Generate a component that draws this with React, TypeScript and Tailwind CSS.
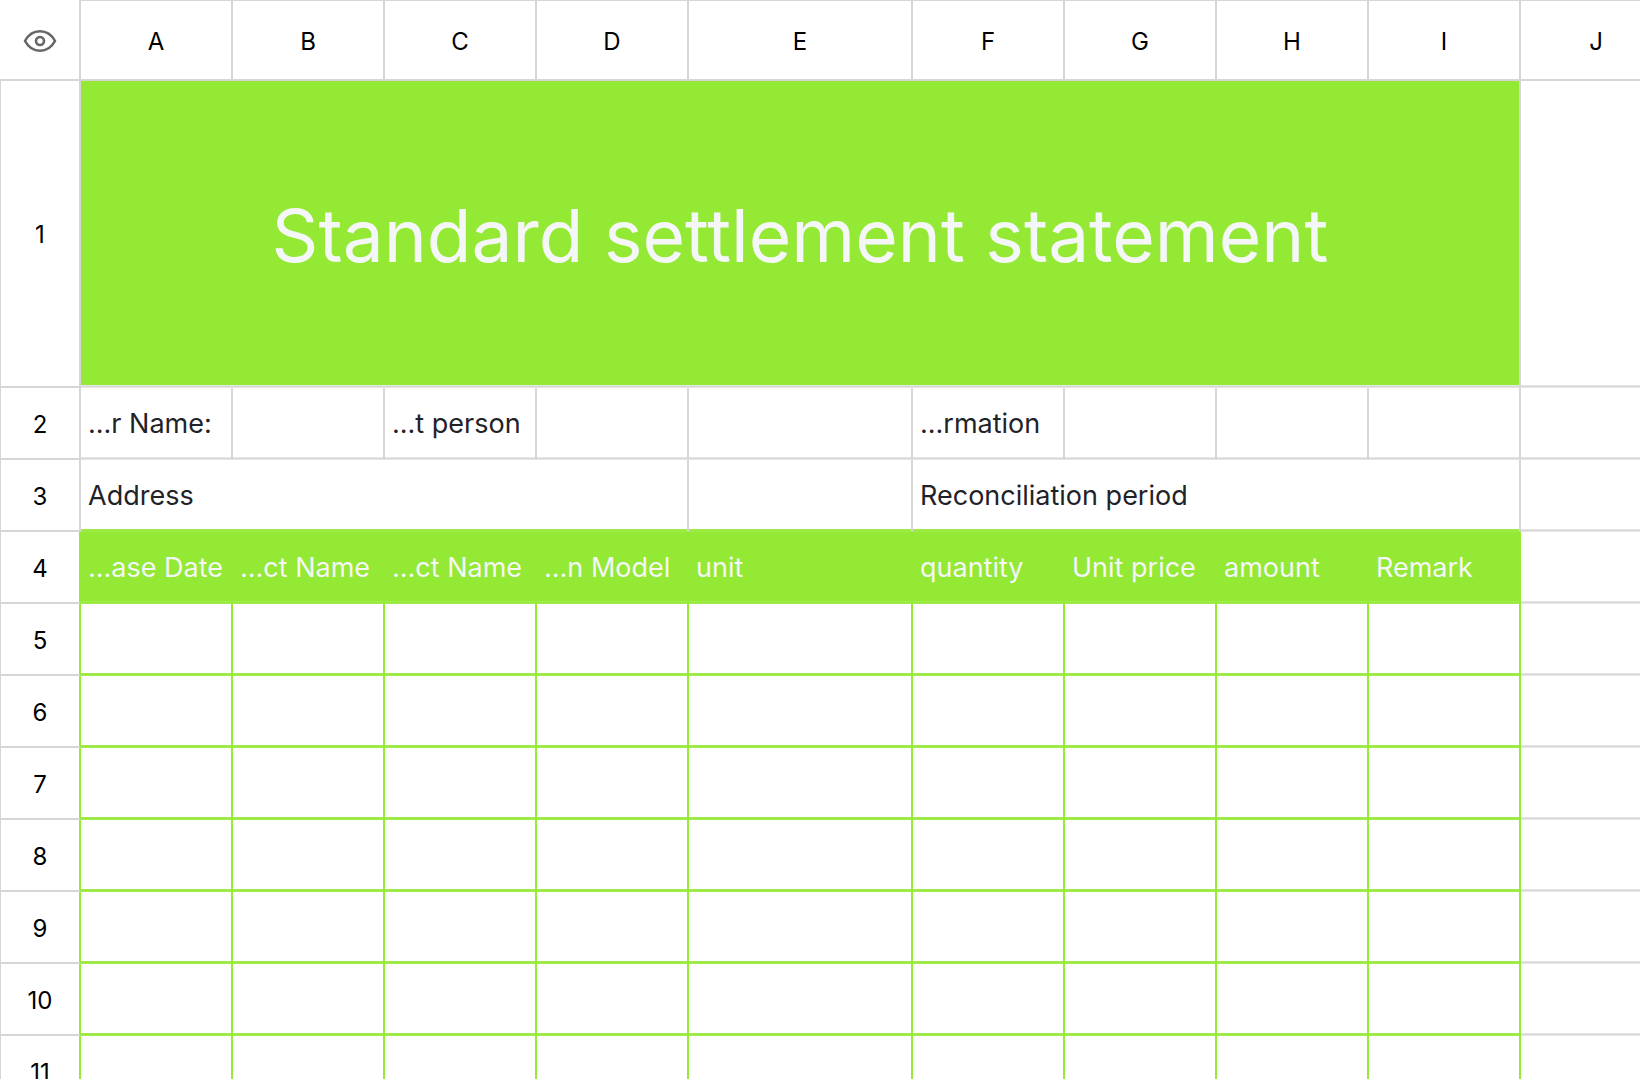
import type { ReactNode } from "react";

const columns = ["A", "B", "C", "D", "E", "F", "G", "H", "I", "J"];
const tableHeads = [
  "...ase Date",
  "...ct Name",
  "...ct Name",
  "...n Model",
  "unit",
  "quantity",
  "Unit price",
  "amount",
  "Remark",
];
const emptyRows = [5, 6, 7, 8, 9, 10, 11];

// three pixel rule with softer outer edges
const GRAY_RULE = "border-b border-b-[#e6e6e6] shadow-[inset_0_-1px_#d6d6d6,inset_0_-2px_#e6e6e6]";
const GREEN_RULE = "border-b border-b-[#a2ec50] shadow-[inset_0_-1px_#93e934,inset_0_-2px_#a2ec50]";

const GRAY = `${GRAY_RULE} border-r-2 border-r-[#d6d6d6]`;
const GREEN = `${GREEN_RULE} border-r-2 border-r-[#93e934]`;
const TEXT = "pl-[7px] pt-px text-left text-[27px] font-normal whitespace-nowrap overflow-hidden";

function RowHead({ n, green = false }: { n: number; green?: boolean }) {
  return (
    <th
      scope="row"
      className={
        green
          ? "pt-[3px] border-b-2 border-l border-r-2 border-[#d6d6d6] border-r-[#93e934] text-2xl font-normal"
          : "pt-[3px] border-b-2 border-l border-r-2 border-[#d6d6d6] text-2xl font-normal"
      }
    >
      {n}
    </th>
  );
}

function Cell({ children }: { children?: ReactNode }) {
  return <td className={`${GRAY} ${TEXT} text-[#1f2329]`}>{children}</td>;
}

export default function App() {
  return (
    <div className="h-screen overflow-hidden bg-white font-['Inter',sans-serif] text-black">
      <table className="w-0 table-fixed border-separate border-spacing-0">
        <colgroup>
          <col className="w-[81px]" />
          {columns.map((c) => (
            <col key={c} className={c === "E" ? "w-[224px]" : "w-[152px]"} />
          ))}
        </colgroup>
        <thead>
          <tr className="h-[81px]">
            <th className="border-b-2 border-r-2 border-[#d6d6d6] p-0 pt-[3px]">
              <button type="button" aria-label="Show hidden" className="block mx-auto">
                <svg width="34" height="24" viewBox="0 0 34 24" fill="none" stroke="#666" strokeWidth="2.6">
                  <path
                    d="M2 12C5.5 5.5 10.8 2.3 17 2.3S28.5 5.5 32 12C28.5 18.5 23.2 21.7 17 21.7S5.5 18.5 2 12Z"
                    strokeLinejoin="round"
                  />
                  <circle cx="17" cy="12" r="4" />
                </svg>
              </button>
            </th>
            {columns.map((c) => (
              <th
                key={c}
                scope="col"
                className="pt-[3px] border-t border-b-2 border-r-2 border-[#d6d6d6] text-2xl font-normal"
              >
                {c}
              </th>
            ))}
          </tr>
        </thead>
        <tbody>
          {/* Title */}
          <tr className="h-[307px]">
            <RowHead n={1} />
            <td
              colSpan={9}
              className={`${GRAY} bg-[#93e934] bg-clip-padding pt-[3px] text-center text-[73px] text-[#f5f6f7]`}
            >
              Standard settlement statement
            </td>
            <Cell />
          </tr>

          {/* Customer info */}
          <tr className="h-[72px]">
            <RowHead n={2} />
            <Cell>...r Name:</Cell>
            <Cell />
            <Cell>...t person</Cell>
            <Cell />
            <Cell />
            <Cell>...rmation</Cell>
            <Cell />
            <Cell />
            <Cell />
            <Cell />
          </tr>
          <tr className="h-[72px]">
            <RowHead n={3} />
            <td colSpan={4} className={`${GREEN_RULE} ${TEXT} border-r-2 border-r-[#d6d6d6] text-[#1f2329]`}>
              Address
            </td>
            <td className={`${GREEN_RULE} border-r-2 border-r-[#d6d6d6]`} />
            <td colSpan={4} className={`${GREEN_RULE} ${TEXT} border-r-2 border-r-[#d6d6d6] text-[#1f2329]`}>
              Reconciliation period
            </td>
            <Cell />
          </tr>

          {/* Items */}
          <tr className="h-[72px]">
            <RowHead n={4} green />
            {tableHeads.map((text, i) => (
              <td key={i} className={`${GREEN} ${TEXT} bg-[#93e934] text-[#f5f6f7]`}>
                {text}
              </td>
            ))}
            <Cell />
          </tr>
          {emptyRows.map((n) => (
            <tr key={n} className="h-[72px]">
              <RowHead n={n} green />
              {tableHeads.map((_, i) => (
                <td key={i} className={GREEN} />
              ))}
              <Cell />
            </tr>
          ))}
        </tbody>
      </table>
    </div>
  );
}
